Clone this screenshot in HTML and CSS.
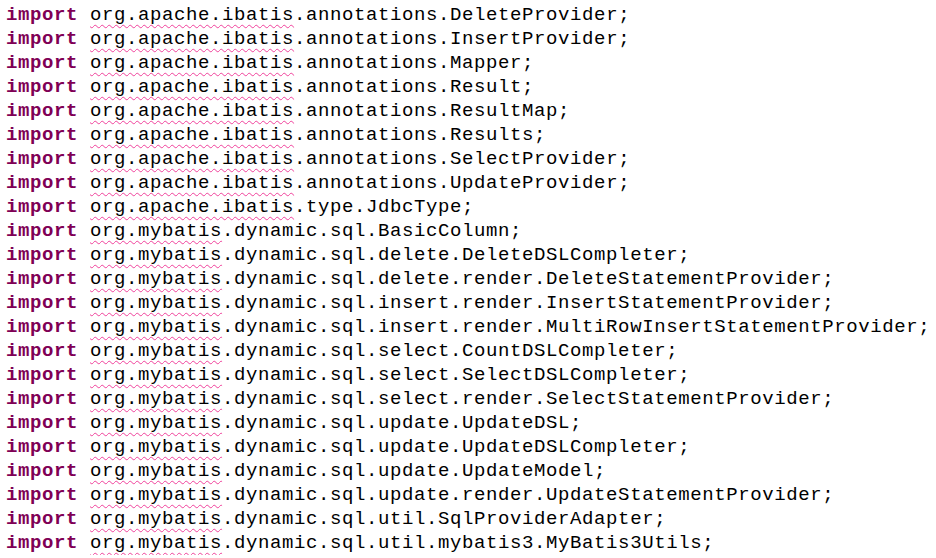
FILE: index.html
```html
<!DOCTYPE html>
<html>

<head>
    <title>Imports</title>
    <link rel="stylesheet" href="styles.css">
</head>

<body>
    <pre class="editor"><span class="kw">import</span> <span class="typo">org.apache.ibatis</span>.annotations.DeleteProvider;
<span class="kw">import</span> <span class="typo">org.apache.ibatis</span>.annotations.InsertProvider;
<span class="kw">import</span> <span class="typo">org.apache.ibatis</span>.annotations.Mapper;
<span class="kw">import</span> <span class="typo">org.apache.ibatis</span>.annotations.Result;
<span class="kw">import</span> <span class="typo">org.apache.ibatis</span>.annotations.ResultMap;
<span class="kw">import</span> <span class="typo">org.apache.ibatis</span>.annotations.Results;
<span class="kw">import</span> <span class="typo">org.apache.ibatis</span>.annotations.SelectProvider;
<span class="kw">import</span> <span class="typo">org.apache.ibatis</span>.annotations.UpdateProvider;
<span class="kw">import</span> <span class="typo">org.apache.ibatis</span>.type.JdbcType;
<span class="kw">import</span> <span class="typo">org.mybatis</span>.dynamic.sql.BasicColumn;
<span class="kw">import</span> <span class="typo">org.mybatis</span>.dynamic.sql.delete.DeleteDSLCompleter;
<span class="kw">import</span> <span class="typo">org.mybatis</span>.dynamic.sql.delete.render.DeleteStatementProvider;
<span class="kw">import</span> <span class="typo">org.mybatis</span>.dynamic.sql.insert.render.InsertStatementProvider;
<span class="kw">import</span> <span class="typo">org.mybatis</span>.dynamic.sql.insert.render.MultiRowInsertStatementProvider;
<span class="kw">import</span> <span class="typo">org.mybatis</span>.dynamic.sql.select.CountDSLCompleter;
<span class="kw">import</span> <span class="typo">org.mybatis</span>.dynamic.sql.select.SelectDSLCompleter;
<span class="kw">import</span> <span class="typo">org.mybatis</span>.dynamic.sql.select.render.SelectStatementProvider;
<span class="kw">import</span> <span class="typo">org.mybatis</span>.dynamic.sql.update.UpdateDSL;
<span class="kw">import</span> <span class="typo">org.mybatis</span>.dynamic.sql.update.UpdateDSLCompleter;
<span class="kw">import</span> <span class="typo">org.mybatis</span>.dynamic.sql.update.UpdateModel;
<span class="kw">import</span> <span class="typo">org.mybatis</span>.dynamic.sql.update.render.UpdateStatementProvider;
<span class="kw">import</span> <span class="typo">org.mybatis</span>.dynamic.sql.util.SqlProviderAdapter;
<span class="kw">import</span> <span class="typo">org.mybatis</span>.dynamic.sql.util.mybatis3.MyBatis3Utils;</pre>
</body>

</html>
```

FILE: styles.css
```css
body {
    margin: 0;
    padding: 0;
    background-color: #ffffff;
}

.editor {
    margin: 0;
    padding: 3px 0 0 6px;
    font-family: "Liberation Mono", monospace;
    font-size: 19px;
    letter-spacing: 0.6px;
    line-height: 24px;
    color: #000000;
}

.kw {
    color: #7f0055;
    font-weight: bold;
}

.typo {
    text-decoration: underline wavy #f0419b;
    text-decoration-thickness: 1px;
    text-underline-offset: 4px;
}
```
